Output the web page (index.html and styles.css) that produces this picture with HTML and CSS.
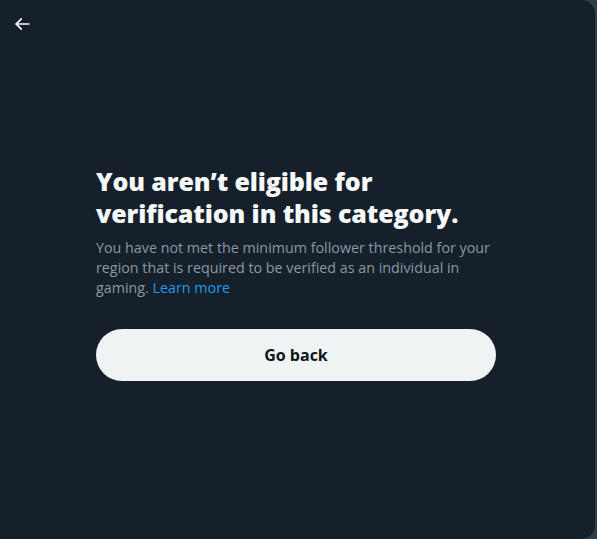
FILE: index.html
```html
<!DOCTYPE html>
<html lang="en">
<head>
<meta charset="utf-8">
<title>Not eligible</title>
<link rel="stylesheet" href="styles.css">
</head>
<body>
<div class="modal">
  <div class="header">
    <button class="back" aria-label="Back">
      <svg viewBox="0 0 24 24" width="20" height="20"><path fill="#f7f9f9" d="M7.414 13l5.043 5.04-1.414 1.42L3.586 12l7.457-7.46 1.414 1.42L7.414 11H21v2H7.414z"/></svg>
    </button>
  </div>
  <div class="content">
    <h1 class="title">You aren’t eligible for verification in this category.</h1>
    <p class="desc">You have not met the minimum follower threshold for your region that is required to be verified as an individual in gaming. <a href="#" class="link">Learn more</a></p>
    <button class="primary">Go back</button>
  </div>
</div>
</body>
</html>
```
FILE: styles.css
```css
html, body {
  margin: 0;
  padding: 0;
  height: 100%;
}
body {
  background: #2c3e4a;
  font-family: "Open Sans", "Noto Sans", sans-serif;
  overflow: hidden;
}
.modal {
  box-sizing: border-box;
  width: 595px;
  height: 539px;
  background: #15202b;
  border-radius: 0 14px 14px 0;
  display: flex;
  flex-direction: column;
}
.header {
  height: 53px;
  padding: 14px 0 0 12px;
  box-sizing: border-box;
}
.back {
  background: none;
  border: 0;
  padding: 0;
  width: 20px;
  height: 20px;
  display: block;
  cursor: pointer;
}
.back svg { display: block; }
.content {
  width: 400px;
  margin-left: 96px;
  padding-top: 112px;
}
.title {
  margin: 0;
  font-family: "Open Sans", sans-serif;
  font-weight: 800;
  font-size: 25px;
  line-height: 32px;
  color: #f7f9f9;
  letter-spacing: -0.1px;
}
.desc {
  margin: 9px 0 0;
  font-size: 14.3px;
  line-height: 20px;
  color: #8b98a5;
}
.link {
  color: #1d9bf0;
  text-decoration: none;
}
.primary {
  display: block;
  width: 400px;
  height: 52px;
  margin-top: 31px;
  border: 0;
  border-radius: 26px;
  background: #eff3f4;
  color: #0f1419;
  font-family: "Open Sans", sans-serif;
  font-weight: 700;
  font-size: 16px;
  cursor: pointer;
}
```
